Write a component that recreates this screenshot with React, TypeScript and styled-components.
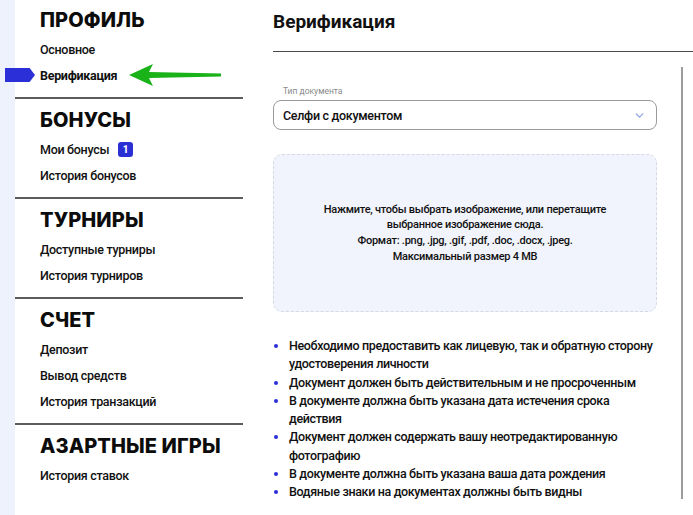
import React from "react";
import styled, { createGlobalStyle } from "styled-components";
import { ChevronDown } from "lucide-react";

const GlobalStyle = createGlobalStyle`
  html, body {
    margin: 0;
    padding: 0;
    background: #ffffff;
  }
  body {
    font-family: Roboto, "Noto Sans", sans-serif;
    color: #111111;
  }
  * {
    box-sizing: border-box;
  }
`;

type NavSection = {
  title: string;
  items: { label: string; active?: boolean; badge?: number }[];
};

const sections: NavSection[] = [
  {
    title: "ПРОФИЛЬ",
    items: [{ label: "Основное" }, { label: "Верификация", active: true }],
  },
  {
    title: "БОНУСЫ",
    items: [{ label: "Мои бонусы", badge: 1 }, { label: "История бонусов" }],
  },
  {
    title: "ТУРНИРЫ",
    items: [{ label: "Доступные турниры" }, { label: "История турниров" }],
  },
  {
    title: "СЧЕТ",
    items: [{ label: "Депозит" }, { label: "Вывод средств" }, { label: "История транзакций" }],
  },
  {
    title: "АЗАРТНЫЕ ИГРЫ",
    items: [{ label: "История ставок" }],
  },
];

const rules = [
  "Необходимо предоставить как лицевую, так и обратную сторону удостоверения личности",
  "Документ должен быть действительным и не просроченным",
  "В документе должна быть указана дата истечения срока действия",
  "Документ должен содержать вашу неотредактированную фотографию",
  "В документе должна быть указана ваша дата рождения",
  "Водяные знаки на документах должны быть видны",
];

const GreenArrow = () => (
  <ArrowSvg width="94" height="24" viewBox="0 0 94 24">
    <path d="M0 12 L24 1 L20 9 L92 10.5 L92 13.5 L20 15 L24 23 Z" fill="#19b219" />
  </ArrowSvg>
);

const App = () => {
  return (
    <>
      <GlobalStyle />
      <Page>
        <Rail />
        <Sidebar>
          {sections.map((section, i) => (
            <Section key={section.title} $first={i === 0}>
              <SectionTitle>{section.title}</SectionTitle>
              <ItemList>
                {section.items.map(item => (
                  <Item key={item.label} $active={item.active}>
                    {item.label}
                    {item.badge !== undefined && <Badge>{item.badge}</Badge>}
                    {item.active && <GreenArrow />}
                  </Item>
                ))}
              </ItemList>
            </Section>
          ))}
        </Sidebar>
        <Main>
          <Title>Верификация</Title>
          <Body>
            <Form>
              <FieldLabel>Тип документа</FieldLabel>
              <Select>
                <span>Селфи с документом</span>
                <ChevronDown size={13} strokeWidth={2.6} color="#93a6e6" />
              </Select>
              <DropZone>
                <p>
                  Нажмите, чтобы выбрать изображение, или перетащите
                  <br />
                  выбранное изображение сюда.
                  <br />
                  Формат: .png, .jpg, .gif, .pdf, .doc, .docx, .jpeg.
                  <br />
                  Максимальный размер 4 MB
                </p>
              </DropZone>
              <Rules>
                {rules.map(rule => (
                  <li key={rule}>{rule}</li>
                ))}
              </Rules>
            </Form>
            <Divider />
          </Body>
        </Main>
      </Page>
    </>
  );
};

const Page = styled.div`
  display: flex;
  width: 693px;
  height: 515px;
  overflow: hidden;
`;

const Rail = styled.div`
  width: 15px;
  flex-shrink: 0;
  background: #eef2fd;
`;

const Sidebar = styled.nav`
  width: 228px;
  flex-shrink: 0;
  background: #ffffff;
`;

const Section = styled.section<{ $first?: boolean }>`
  padding: ${p => (p.$first ? "8px" : "9px")} 0 9px 25px;
  border-top: ${p => (p.$first ? "none" : "2px solid #5c5c5c")};
`;

const SectionTitle = styled.h2`
  margin: 0 0 4px;
  font-family: Inter, Roboto, sans-serif;
  font-size: 20px;
  line-height: 24px;
  font-weight: 800;
  letter-spacing: 0.1px;
  color: #0c0c0c;
`;

const ItemList = styled.ul`
  list-style: none;
  margin: 0;
  padding: 0;
`;

const Item = styled.li<{ $active?: boolean }>`
  position: relative;
  display: flex;
  align-items: center;
  height: 26px;
  font-size: 12.5px;
  letter-spacing: -0.3px;
  font-weight: ${p => (p.$active ? 700 : 500)};
  color: #111111;

  &::before {
    content: "";
    display: ${p => (p.$active ? "block" : "none")};
    position: absolute;
    left: -35px;
    top: 6px;
    width: 30px;
    height: 14px;
    background: #2b2fd8;
    clip-path: polygon(0 0, 82% 0, 100% 50%, 82% 100%, 0 100%);
  }
`;

const Badge = styled.span`
  display: inline-flex;
  align-items: center;
  justify-content: center;
  width: 15px;
  height: 15px;
  margin-left: 9px;
  border-radius: 3px;
  background: #2b2fd4;
  color: #ffffff;
  font-size: 10px;
  font-weight: 800;
  letter-spacing: 0;
`;

const ArrowSvg = styled.svg`
  margin-left: 12px;
  flex-shrink: 0;
`;

const Main = styled.main`
  flex: 1;
  padding-left: 30px;
  min-width: 0;
`;

const Title = styled.h1`
  margin: 0;
  padding: 10px 0 17px;
  font-size: 19px;
  line-height: 24px;
  font-weight: 700;
  color: #111111;
  border-bottom: 1.5px solid #4a4a4a;
`;

const Body = styled.div`
  display: flex;
  justify-content: space-between;
`;

const Form = styled.div`
  width: 384px;
  padding-top: 33px;
`;

const FieldLabel = styled.div`
  padding-left: 10px;
  margin-bottom: 3px;
  font-size: 8.5px;
  line-height: 12px;
  color: #8a8a8a;
`;

const Select = styled.div`
  display: flex;
  align-items: center;
  justify-content: space-between;
  height: 30px;
  padding: 0 10px 0 9px;
  border: 1.5px solid #9a9a9a;
  border-radius: 8px;
  font-size: 12.5px;
  letter-spacing: -0.3px;
  font-weight: 500;
  color: #111111;
`;

const DropZone = styled.div`
  display: flex;
  align-items: center;
  justify-content: center;
  height: 158px;
  margin-top: 24px;
  border: 1px dashed #d3d9e6;
  border-radius: 9px;
  background: #f1f4fd;
  text-align: center;

  p {
    margin: 0;
    font-size: 11px;
    letter-spacing: -0.25px;
    line-height: 15.6px;
    font-weight: 500;
    color: #111111;
  }
`;

const Rules = styled.ul`
  margin: 25px 0 0;
  padding-left: 16px;
  font-size: 12.5px;
  letter-spacing: -0.35px;
  line-height: 18.3px;
  font-weight: 500;
  color: #111111;

  li::marker {
    color: #2b2fd4;
  }
`;

const Divider = styled.div`
  width: 2px;
  height: 432px;
  margin: 15px 10px 0 0;
  background: #9c9c9c;
`;

export default App;
